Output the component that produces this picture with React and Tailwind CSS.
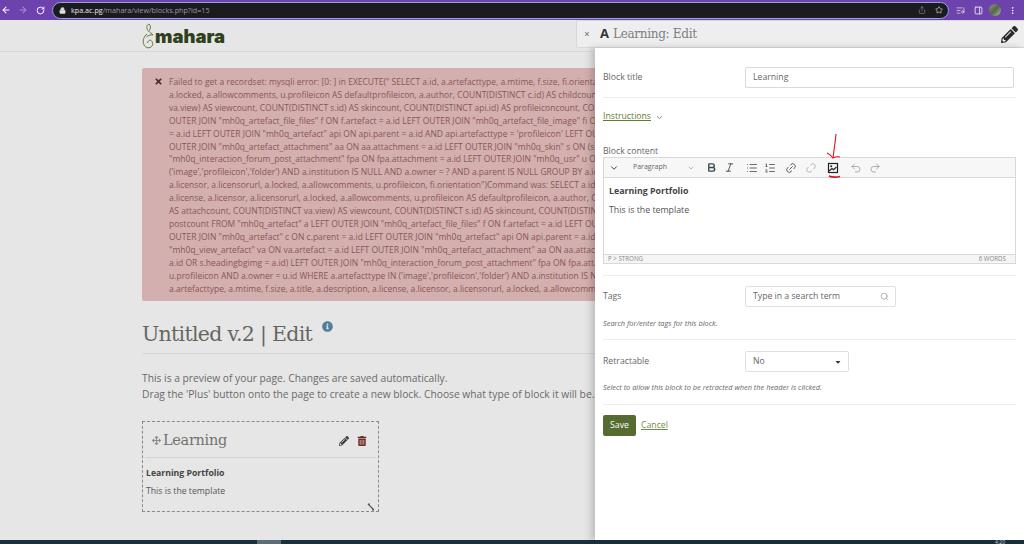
import React from "react";
import {
  ArrowLeft,
  ArrowRight,
  RotateCw,
  Lock,
  Share,
  Star,
  ListMusic,
  PanelRight,
  MoreVertical,
  ChevronDown,
  Bold,
  Italic,
  List,
  ListOrdered,
  Link2,
  Unlink2,
  Undo2,
  Redo2,
  Search,
} from "lucide-react";
import { FaPencilAlt, FaTrashAlt, FaTimes, FaInfoCircle, FaArrowsAlt, FaCaretDown } from "react-icons/fa";

const open = "font-['Open_Sans',sans-serif]";
const slab = "font-['DejaVu_Serif',serif]";

const errorLines = [
  `Failed to get a recordset: mysqli error: [0: ] in EXECUTE(" SELECT a.id, a.artefacttype, a.mtime, f.size, fi.orientation`,
  `a.locked, a.allowcomments, u.profileicon AS defaultprofileicon, a.author, COUNT(DISTINCT c.id) AS childcount, COUNT`,
  `va.view) AS viewcount, COUNT(DISTINCT s.id) AS skincount, COUNT(DISTINCT api.id) AS profileiconcount, COUNT(DISTINCT`,
  `OUTER JOIN "mh0q_artefact_file_files" f ON f.artefact = a.id LEFT OUTER JOIN "mh0q_artefact_file_image" fi ON fi.artefact`,
  `= a.id LEFT OUTER JOIN "mh0q_artefact" api ON api.parent = a.id AND api.artefacttype = 'profileicon' LEFT OUTER JOIN`,
  `OUTER JOIN "mh0q_artefact_attachment" aa ON aa.attachment = a.id LEFT OUTER JOIN "mh0q_skin" s ON (s.id = a.id OR`,
  `"mh0q_interaction_forum_post_attachment" fpa ON fpa.attachment = a.id LEFT OUTER JOIN "mh0q_usr" u ON a.id = u.id`,
  `('image','profileicon','folder') AND a.institution IS NULL AND a.owner = ? AND a.parent IS NULL GROUP BY a.id, a.title`,
  `a.licensor, a.licensorurl, a.locked, a.allowcomments, u.profileicon, fi.orientation")Command was: SELECT a.id, a.title`,
  `a.license, a.licensor, a.licensorurl, a.locked, a.allowcomments, u.profileicon AS defaultprofileicon, a.author, COUNT`,
  `AS attachcount, COUNT(DISTINCT va.view) AS viewcount, COUNT(DISTINCT s.id) AS skincount, COUNT(DISTINCT api.id)`,
  `postcount FROM "mh0q_artefact" a LEFT OUTER JOIN "mh0q_artefact_file_files" f ON f.artefact = a.id LEFT OUTER JOIN`,
  `OUTER JOIN "mh0q_artefact" c ON c.parent = a.id LEFT OUTER JOIN "mh0q_artefact" api ON api.parent = a.id AND`,
  `"mh0q_view_artefact" va ON va.artefact = a.id LEFT OUTER JOIN "mh0q_artefact_attachment" aa ON aa.attachment = a.id`,
  `a.id OR s.headingbgimg = a.id) LEFT OUTER JOIN "mh0q_interaction_forum_post_attachment" fpa ON fpa.attachment = a.id`,
  `u.profileicon AND a.owner = u.id WHERE a.artefacttype IN ('image','profileicon','folder') AND a.institution IS NULL`,
  `a.artefacttype, a.mtime, f.size, a.title, a.description, a.license, a.licensor, a.licensorurl, a.locked, a.allowcomments`,
];

function BrowserBar() {
  return (
    <div className="flex h-5 shrink-0 items-center bg-[#6d42ad] text-white">
      <ArrowLeft size={10} strokeWidth={2.5} className="ml-[1px]" />
      <ArrowRight size={10} strokeWidth={2.5} className="ml-[7px] text-[#a98fd6]" />
      <RotateCw size={9} strokeWidth={2.5} className="ml-[8px]" />
      <div className="ml-[7px] flex h-[17px] w-[897px] items-center rounded-full border border-[#8fa8e0] bg-[#1b1c20] pl-[6px] pr-[5px]">
        <Lock size={7} fill="#ddd" className="text-[#ddd]" />
        <span className={`ml-[5px] text-[7.2px] text-[#9a9aa0] ${open}`}>
          <span className="text-[#e8e8ea]">kpa.ac.pg</span>/mahara/view/blocks.php?id=15
        </span>
        <Share size={8} className="ml-auto text-[#8a8a90]" />
        <Star size={8} className="ml-[9px] text-[#d8d8d8]" />
      </div>
      <ListMusic size={9} className="ml-[7px] text-[#ddd]" />
      <PanelRight size={9} className="ml-[9px]" />
      <div className="ml-[6px] h-3 w-3 rounded-full bg-[linear-gradient(135deg,#8ea07a,#54664a,#b5c2a8)]" />
      <MoreVertical size={9} className="ml-[7px]" />
    </div>
  );
}

function Logo() {
  return (
    <div className="flex h-[31px] items-center pl-[142px]">
      <svg width="13" height="26" viewBox="0 0 13 26" fill="none" stroke="#5a7a3a" strokeWidth="1">
        <path d="M7 1c-2.500 1-3 4-1 6.500s4 3 5 4.500c-2.500-.5-5 .5-6.500 2" />
        <path d="M7 1c2 1.500 1.800 4 .3 6.500" />
        <path d="M5 11C2 13.500.5 17 1.500 20.500S5.500 25.500 8 24.500 11.500 21 10 18.500 6 17.500 5.500 20" />
      </svg>
      <span className="mt-[1px] font-['Inter',sans-serif] text-[18.5px] leading-none font-black text-[#2f401d]">mahara</span>
    </div>
  );
}

function PageBehind() {
  return (
    <div className="flex-1 overflow-hidden bg-[#e6e6e6] text-[#5e5e5e]">
      <div className="border-b border-[#d8d8d8]">
        <Logo />
      </div>
      <div className="pl-[142px]">
        <div className={`mt-[16px] flex h-[233px] w-[900px] gap-[6px] rounded-[2px] border border-[#d2b0b0] bg-[#d3b0af] pl-[11px] pt-[7px] text-[8.5px] leading-[12.9px] text-[#8a5656] ${open}`}>
          <FaTimes size={9} className="mt-[1px] shrink-0 text-[#4b2b2b]" />
          <div className="whitespace-nowrap">
            {errorLines.map((line) => (
              <div key={line}>{line}</div>
            ))}
          </div>
        </div>
        <div className="mt-[19px] flex h-[34px] w-[900px] items-start border-b border-[#d6d6d6]">
          <h1 className={`text-[20.5px] leading-[28px] tracking-[-0.7px] text-[#66665f] ${slab}`}>Untitled v.2 | Edit</h1>
          <FaInfoCircle size={11} className="ml-[10px] mt-[1px] text-[#4f7f9c]" />
        </div>
        <p className={`mt-[16px] whitespace-nowrap text-[10.25px] leading-[16px] text-[#6a6a6a] ${open}`}>
          This is a preview of your page. Changes are saved automatically.
          <br />
          Drag the 'Plus' button onto the page to create a new block. Choose what type of block it will be.
        </p>
        <div className="mt-[19px] h-[91px] w-[237px] border border-dashed border-[#8a8a8a] px-[2px] pt-[2px]">
          <div className="flex h-[34px] items-center border-b border-[#d2d2d2] pl-[7px] pr-[9px]">
            <FaArrowsAlt size={9} className="text-[#8c8c8c]" />
            <span className={`ml-[2px] text-[14.500px] tracking-[-0.3px] text-[#73736e] ${slab}`}>Learning</span>
            <FaPencilAlt size={10} className="ml-auto text-[#3d3d3a]" />
            <FaTrashAlt size={10} className="ml-[8px] text-[#6e2b22]" />
          </div>
          <div className={`relative pl-[1px] text-[8.7px] text-[#444] ${open}`}>
            <p className="mt-[9px] font-bold leading-[13px]">Learning Portfolio</p>
            <p className="mt-[5px] leading-[13px] text-[#555]">This is the template</p>
            <svg width="8" height="8" viewBox="0 0 8 8" className="absolute right-[1px] top-[36px]" stroke="#555" strokeWidth="1.2">
              <path d="M1 1l6 6M1 1h2M7 7H5" />
            </svg>
          </div>
        </div>
      </div>
    </div>
  );
}

function ToolBtn({ icon: Icon, className = "", width = 1.6 }) {
  return <Icon size={12} strokeWidth={width} className={className} />;
}

function InsertImageIcon() {
  return (
    <svg width="12" height="12" viewBox="0 0 12 12" fill="none" stroke="#222" strokeWidth="1.2" className="ml-[10px]">
      <rect x="1.500" y="1.500" width="9" height="9" />
      <circle cx="4.200" cy="4.200" r="1" fill="#222" stroke="none" />
      <path d="M2 9L5 6.500l1.500 1.200L9.500 5" />
    </svg>
  );
}

function Editor() {
  return (
    <div className={`w-[413px] border border-[#d9d9d9] ${open}`}>
      <div className="flex h-[20px] items-center border-b border-[#d9d9d9] bg-[#f7f7f7] text-[#3f4a52]">
        <ChevronDown size={10} strokeWidth={2.4} className="ml-[5px]" />
        <span className="ml-[14px] w-[53px] text-[7px] text-[#666]">Paragraph</span>
        <ChevronDown size={8} className="ml-[1px] text-[#999]" />
        <Bold size={11} strokeWidth={3} className="ml-[11px]" />
        <Italic size={11} className="ml-[7px]" />
        <ToolBtn icon={List} className="ml-[11px]" />
        <ToolBtn icon={ListOrdered} className="ml-[6px]" />
        <ToolBtn icon={Link2} className="ml-[9px] -rotate-45" />
        <ToolBtn icon={Unlink2} className="ml-[8px] -rotate-45 text-[#aaa]" />
        <InsertImageIcon />
        <ToolBtn icon={Undo2} className="ml-[11px] text-[#999]" />
        <ToolBtn icon={Redo2} className="ml-[7px] text-[#999]" />
      </div>
      <div className="h-[76px] px-[5px] pt-[7px] text-[8.8px] text-[#555]">
        <p className="font-bold leading-[12px] text-[#444]">Learning Portfolio</p>
        <p className="mt-[7px] leading-[12px]">This is the template</p>
      </div>
      <div className="flex h-[9px] items-center justify-between border-t border-[#d9d9d9] bg-[#f5f5f5] pl-[4px] pr-[9px] text-[6.2px] text-[#888]">
        <span>P &gt; STRONG</span>
        <span>6 WORDS</span>
      </div>
    </div>
  );
}

function Drawer() {
  return (
    <div className={`absolute right-0 top-0 bottom-0 flex w-[448px] flex-col ${open}`}>
      <div className="flex h-[28px] shrink-0 items-center rounded-tl-[2px] rounded-bl-[2px] border border-r-0 border-[#d8d8d8] bg-[#eeeeee] pl-[7px] pr-[6px]">
        <FaTimes size={6} className="text-[#8c8c8c]" />
        <span className="ml-[10px] text-[13px] font-bold text-[#333]">A</span>
        <span className={`ml-[4px] text-[12.100px] tracking-[-0.35px] text-[#7c7f82] ${slab}`}>Learning: Edit</span>
        <FaPencilAlt size={17} className="ml-auto text-[#2b2b2b]" />
      </div>
      <div className="ml-[19px] flex-1 overflow-hidden bg-white pl-[8px] pr-[8px] text-[8.7px] text-[#666] shadow-[-4px_0_7px_rgba(0,0,0,0.18)]">
        <div className="flex h-[50px] items-center border-b border-[#ececec] pt-[10px]">
          <span className="w-[142px]">Block title</span>
          <div className="flex h-[21px] w-[269px] items-center rounded-[2px] border border-[#d9d9d9] pl-[7px] text-[#666]">Learning</div>
        </div>
        <div className="mt-[9px] flex h-[20px] items-center text-[#5f7d2e]">
          <span className="underline">Instructions</span>
          <ChevronDown size={9} className="ml-[4px] text-[#666]" />
        </div>
        <div className="mt-[18px] h-[12px] leading-[12px]">Block content</div>
        <Editor />
        <div className="mt-[11px] border-t border-[#ececec]" />
        <div className="mt-[10px] flex items-center">
          <span className="w-[142px]">Tags</span>
          <div className="flex h-[21px] w-[151px] items-center justify-between rounded-[2px] border border-[#e0e0e0] pl-[7px] pr-[6px]">
            Type in a search term
            <Search size={9} className="text-[#999]" />
          </div>
        </div>
        <p className="mt-[10px] text-[7.4px] italic leading-[12px] text-[#666]">Search for/enter tags for this block.</p>
        <div className="mt-[10px] border-t border-[#ececec]" />
        <div className="mt-[11px] flex items-center">
          <span className="w-[142px]">Retractable</span>
          <div className="flex h-[21px] w-[104px] items-center justify-between rounded-[2px] border border-[#e0e0e0] pl-[7px] pr-[6px]">
            No
            <FaCaretDown size={8} className="text-[#333]" />
          </div>
        </div>
        <p className="mt-[9px] text-[7.4px] italic leading-[12px] text-[#666]">Select to allow this block to be retracted when the header is clicked.</p>
        <div className="mt-[11px] border-t border-[#ececec]" />
        <div className="mt-[10px] flex items-center">
          <div className="flex h-[21px] w-[33px] items-center justify-center rounded-[2px] bg-[#556b2f] text-white">Save</div>
          <span className="ml-[5px] text-[#6f8a45] underline">Cancel</span>
        </div>
      </div>
      {/* red scribble from the screenshot */}
      <svg width="20" height="48" viewBox="0 0 20 48" fill="none" stroke="#e01020" strokeWidth="1.1" className="absolute left-[250px] top-[113px]">
        <path d="M10 1C9.500 8 8 16 7 25" />
        <path d="M1 20c2.500 1 4.500 3 6 5 2-1 4.500-1.500 7-1" />
        <path d="M3 43c3 1.500 7 1.500 11 .5" strokeWidth="1.8" />
      </svg>
    </div>
  );
}

export default function App() {
  return (
    <div className="flex h-[544px] w-[1024px] flex-col overflow-hidden">
      <BrowserBar />
      <div className="relative flex min-h-0 flex-1 flex-col">
        <PageBehind />
        <Drawer />
      </div>
      <div className="flex h-[4px] shrink-0 items-center overflow-hidden bg-[#16323f]">
        <div className="ml-[257px] h-full w-[24px] bg-[#5b6e78]" />
        <span className="ml-auto mr-[19px] text-[5px] leading-none text-[#cdd5da]">4:20</span>
      </div>
    </div>
  );
}
